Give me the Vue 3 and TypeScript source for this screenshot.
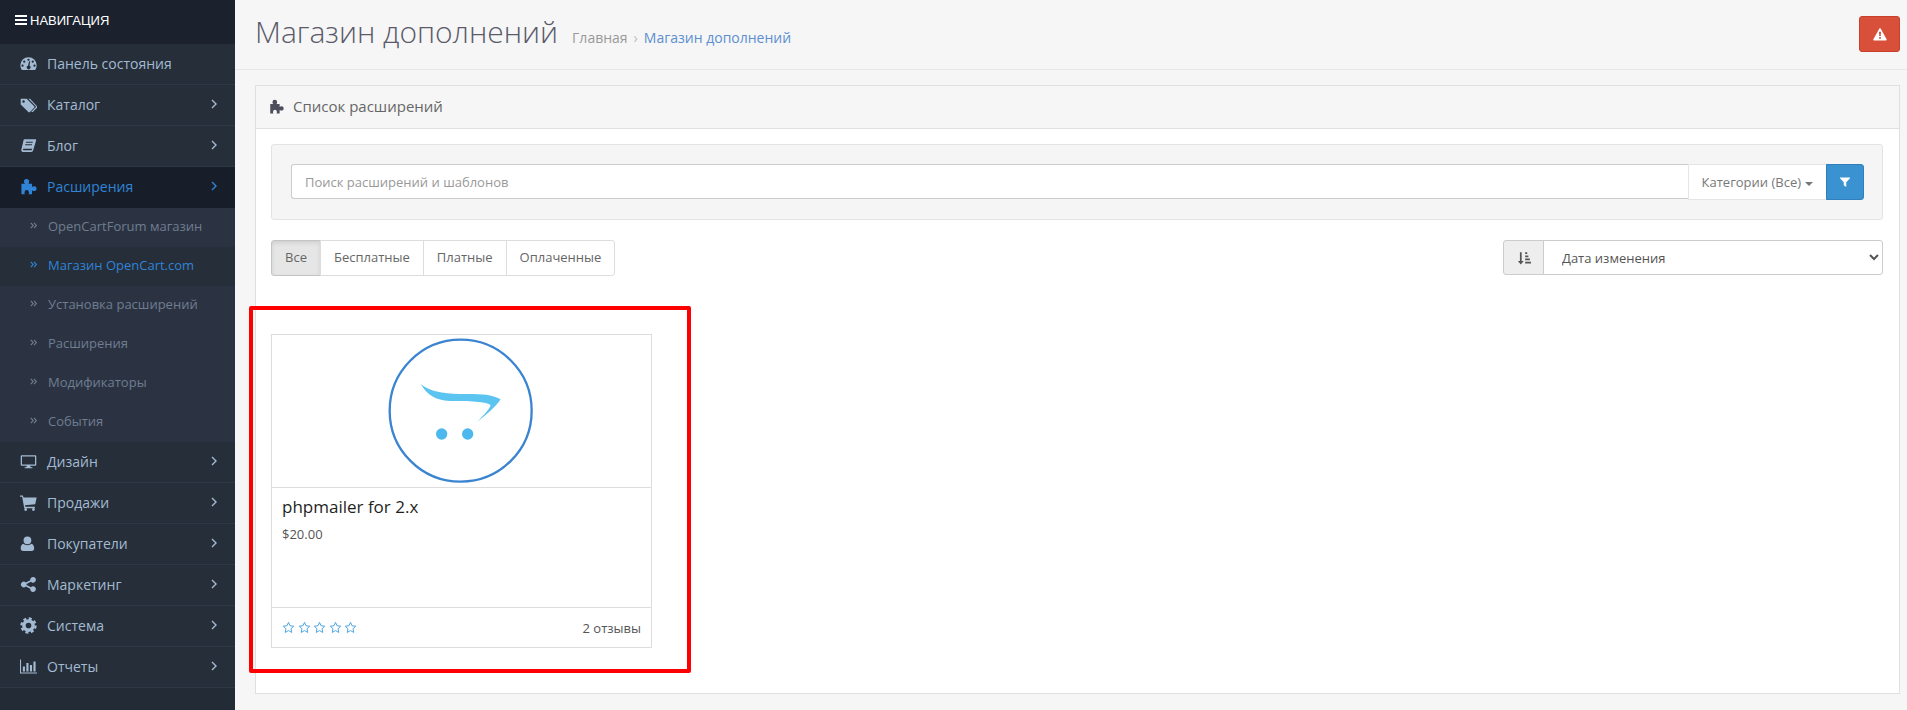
<script setup lang="ts">
interface MenuItem {
  label: string
  icon: string
  arrow: boolean
  active?: boolean
}

const topMenu: MenuItem[] = [
  { label: 'Панель состояния', icon: 'dashboard', arrow: false },
  { label: 'Каталог', icon: 'tags', arrow: true },
  { label: 'Блог', icon: 'book', arrow: true },
  { label: 'Расширения', icon: 'puzzle', arrow: true, active: true }
]

const subMenu = [
  { label: 'OpenCartForum магазин', active: false },
  { label: 'Магазин OpenCart.com', active: true },
  { label: 'Установка расширений', active: false },
  { label: 'Расширения', active: false },
  { label: 'Модификаторы', active: false },
  { label: 'События', active: false }
]

const bottomMenu: MenuItem[] = [
  { label: 'Дизайн', icon: 'desktop', arrow: true },
  { label: 'Продажи', icon: 'cart', arrow: true },
  { label: 'Покупатели', icon: 'user', arrow: true },
  { label: 'Маркетинг', icon: 'share', arrow: true },
  { label: 'Система', icon: 'cog', arrow: true },
  { label: 'Отчеты', icon: 'chart', arrow: true }
]

const tabs = ['Все', 'Бесплатные', 'Платные', 'Оплаченные']
const stars = [1, 2, 3, 4, 5]

const icons: Record<string, string> = {
  dashboard:
    'M12 3A11.5 11.5 0 0 0 .5 14.5c0 2.6.8 4.8 2.2 6.5h18.6c1.4-1.7 2.2-3.9 2.2-6.5A11.5 11.5 0 0 0 12 3zM12 5.2a1.6 1.6 0 1 1 0 3.2 1.6 1.6 0 0 1 0-3.2zM6 7.8a1.6 1.6 0 1 1 0 3.2 1.6 1.6 0 0 1 0-3.2zM18 7.8a1.6 1.6 0 1 1 0 3.2 1.6 1.6 0 0 1 0-3.2zM3.6 13.4a1.6 1.6 0 1 1 0 3.2 1.6 1.6 0 0 1 0-3.2zM20.4 13.4a1.6 1.6 0 1 1 0 3.2 1.6 1.6 0 0 1 0-3.2zM14.4 9l-1 6.2a2.6 2.6 0 1 1-2.1-.1l1.6-6.4z',
  tags:
    'M1 4h8.5L20 14.5a1.6 1.6 0 0 1 0 2.2l-6 6a1.6 1.6 0 0 1-2.2 0L1 12zM5 6a1.8 1.8 0 1 0 0 3.6A1.8 1.8 0 0 0 5 6zM12 4h2.2L24 14.5a1.6 1.6 0 0 1 0 2.2l-6 6h-2.4l6.6-6.8a1.4 1.4 0 0 0 0-1.6z',
  book:
    'M6 3h15.5c1 0 1.5.8 1.2 1.8L18.5 19c-.4 1.3-1.2 2-2.6 2H4.2C2.6 21 1.5 19.5 1.8 18L5 4.5C5.2 3.6 5.5 3 6 3zM8.6 6.8l-.4 1.4h9.6l.4-1.4zM7.5 10.4l-.4 1.4h9.6l.4-1.4zM5.3 16.5c-.8 0-1.3.5-1.3 1.2s.5 1.1 1.3 1.1h11.2l.7-2.3z',
  puzzle:
    'M7 8C6 7 5.5 6 5.5 5A3.7 3.7 0 0 1 13 5C13 6 12.5 7 12 8H17V12.5C18 12 19 11.5 20 11.5A3.5 3.5 0 0 1 20 18.5C19 18.5 18 18 17 17.5V23H12C12.5 22 13 21 12.5 20A3 3 0 0 0 6.5 20C6 21 6.500 22 7 23H2V8Z',
  desktop:
    'M2.5 3h19A1.5 1.5 0 0 1 23 4.5v12a1.5 1.5 0 0 1-1.5 1.5H14.5l.5 2h2.5v1.5h-11V20H9l.5-2H2.5A1.5 1.5 0 0 1 1 16.5v-12A1.5 1.5 0 0 1 2.5 3zM2.8 4.8v11.400h18.400V4.800z',
  cart:
    'M0 2h4l1 3h18.5l-2 9.5-14.5 1.5.5 2H21v2H6L3 3.900H0zM8 20a2 2 0 1 1 0 4 2 2 0 0 1 0-4zM19 20a2 2 0 1 1 0 4 2 2 0 0 1 0-4z',
  user:
    'M10.5 2a5.5 5.5 0 1 1 0 11 5.5 5.5 0 0 1 0-11zM5 12.5c1.4 1.4 3.4 2 5.5 2s4.100-.6 5.500-2c2.500.3 4 2.800 4 6.500 0 2.200-1.300 3.500-3.400 3.500H4.400C2.300 22.500 1 21.200 1 19c0-3.700 1.500-6.200 4-6.500z',
  share:
    'M18.5 1.500a4 4 0 1 1-3 6.700l-6.300 3.100a4 4 0 0 1 0 1.400l6.300 3.100a4 4 0 1 1-1 2.100l-6.300-3.100a4 4 0 1 1 0-5.600l6.300-3.100a4 4 0 0 1 4-4.600z',
  chart:
    'M0 2h1.500v18.500H24V22H0zM4 12h3v7H4zM9 7h3v12H9zM14 10h3v9h-3zM19 5h3v14h-3z',
  filter: 'M2 3h20v1.500l-7.500 8V22l-5-3.500v-6L2 4.500z',
  warning:
    'M12 2c.6 0 1 .3 1.300.8l10 18c.5 1-.1 2.200-1.300 2.200H2c-1.200 0-1.800-1.200-1.300-2.200l10-18C11 2.300 11.400 2 12 2zM10.300 8l.4 7.500h2.600l.4-7.500zM10.500 17v3h3v-3z',
  sort:
    'M5 2h3v15h3.500l-5 6-5-6H5zM14 2h3.500v3H14zM14 7.500h5.500v3H14zM14 13h8v3h-8zM14 18.500h10v3H14z'
}
</script>

<template>
  <div class="page">
    <aside class="sidebar">
      <div class="nav-title">
        <svg class="bars" viewBox="0 0 12 10"><path d="M0 0h12v2H0zM0 4h12v2H0zM0 8h12v2H0z" /></svg>
        НАВИГАЦИЯ
      </div>
      <ul class="menu">
        <li v-for="item in topMenu" :key="item.label" class="menu-row" :class="{ active: item.active }">
          <svg class="menu-icon" viewBox="0 0 24 24"><path fill-rule="evenodd" :d="icons[item.icon]" /></svg>
          <span class="menu-label">{{ item.label }}</span>
          <svg v-if="item.arrow" class="arrow" viewBox="0 0 6 10"><path d="M1 1l4 4-4 4" /></svg>
        </li>
        <li class="sub-wrap">
          <ul class="submenu">
            <li v-for="sub in subMenu" :key="sub.label" class="sub-row" :class="{ active: sub.active }">
              <svg class="sub-arrow" viewBox="0 0 10 8"><path d="M1 .8l3 3.200-3 3.200M5 .8l3 3.200-3 3.200" /></svg>
              {{ sub.label }}
            </li>
          </ul>
        </li>
        <li v-for="item in bottomMenu" :key="item.label" class="menu-row">
          <svg v-if="item.icon === 'cog'" class="menu-icon" viewBox="0 0 24 24">
            <circle class="cog-ring" cx="12" cy="12" r="6.500" />
            <circle class="cog-teeth" cx="12" cy="12" r="9.800" />
          </svg>
          <svg v-else class="menu-icon" viewBox="0 0 24 24"><path fill-rule="evenodd" :d="icons[item.icon]" /></svg>
          <span class="menu-label">{{ item.label }}</span>
          <svg v-if="item.arrow" class="arrow" viewBox="0 0 6 10"><path d="M1 1l4 4-4 4" /></svg>
        </li>
      </ul>
    </aside>

    <main class="content">
      <header class="page-header">
        <h1>Магазин дополнений</h1>
        <div class="crumbs">
          <span class="crumb-home">Главная</span>
          <span class="crumb-sep">›</span>
          <span class="crumb-link">Магазин дополнений</span>
        </div>
        <button class="btn-alert" type="button">
          <svg viewBox="0 0 24 24"><path fill-rule="evenodd" :d="icons.warning" /></svg>
        </button>
      </header>

      <section class="panel">
        <div class="panel-heading">
          <svg class="panel-icon" viewBox="0 0 24 24"><path fill-rule="evenodd" :d="icons.puzzle" /></svg>
          Список расширений
        </div>
        <div class="panel-body">
          <div class="well">
            <input class="search" type="text" placeholder="Поиск расширений и шаблонов" />
            <button class="btn-category" type="button">Категории (Все) <i class="caret"></i></button>
            <button class="btn-filter" type="button">
              <svg viewBox="0 0 24 24"><path :d="icons.filter" /></svg>
            </button>
          </div>

          <div class="toolbar">
            <div class="tabs">
              <button v-for="(tab, i) in tabs" :key="tab" class="tab" :class="{ on: i === 0 }" type="button">{{ tab }}</button>
            </div>
            <div class="sort">
              <span class="sort-addon">
                <svg viewBox="0 0 24 24"><path :d="icons.sort" /></svg>
              </span>
              <select class="sort-select">
                <option>Дата изменения</option>
              </select>
            </div>
          </div>

          <article class="card">
            <div class="card-image">
              <svg class="logo" viewBox="45 15 450 453">
                <circle cx="272" cy="242" r="213" fill="none" stroke="#3a84d0" stroke-width="7" />
                <path fill="#5cc4f0" d="M152 162C178 184 215 191 270 192C320 192 360 190 392 208C375 235 345 255 320 278C340 255 358 240 362 225C340 212 280 214 240 213C195 211 172 195 152 162Z" />
                <circle cx="215" cy="312" r="17" fill="#4cb8ee" />
                <circle cx="293" cy="312" r="17" fill="#4cb8ee" />
              </svg>
            </div>
            <div class="card-caption">
              <h4>phpmailer for 2.x</h4>
              <p>$20.00</p>
            </div>
            <div class="card-footer">
              <div class="stars">
                <svg v-for="s in stars" :key="s" class="star" viewBox="0 0 24 24">
                  <path d="M12 2.500l2.900 6.300 6.800.8-5 4.700 1.300 6.800-6-3.400-6 3.400 1.300-6.800-5-4.700 6.800-.8z" />
                </svg>
              </div>
              <span class="reviews">2 отзывы</span>
            </div>
          </article>
        </div>
      </section>

      <div class="red-frame"></div>
    </main>
  </div>
</template>

<style>
html,
body {
  margin: 0;
  background: #f6f6f6;
}
</style>

<style scoped>
* {
  box-sizing: border-box;
}

.page {
  display: flex;
  height: 710px;
  overflow: hidden;
  font-family: "Open Sans", sans-serif;
  font-size: 13px;
  color: #666;
}

/* sidebar */
.sidebar {
  width: 235px;
  flex-shrink: 0;
  background: #232b36;
}

.nav-title {
  height: 44px;
  padding: 0 0 4px 15px;
  display: flex;
  align-items: center;
  gap: 3px;
  background: #1b222e;
  color: #fff;
  font-family: "Liberation Sans", sans-serif;
  font-size: 13px;
}

.bars {
  width: 12px;
  height: 10px;
  fill: #fff;
}

.menu,
.submenu {
  list-style: none;
  margin: 0;
  padding: 0;
}

.menu-row {
  height: 41px;
  display: flex;
  align-items: center;
  padding: 0 18px 2px 20px;
  background: #262e39;
  border-bottom: 1px solid #2e3845;
  color: #a3bbd2;
  font-size: 14px;
}

.menu-row.active {
  background: #181e29;
  border-bottom-color: #181e29;
  color: #2f84d6;
}

.menu-icon {
  width: 17px;
  height: 17px;
  fill: currentColor;
  flex-shrink: 0;
  margin-right: 10px;
}

.cog-ring {
  fill: none;
  stroke: currentColor;
  stroke-width: 5;
}

.cog-teeth {
  fill: none;
  stroke: currentColor;
  stroke-width: 3.500;
  stroke-dasharray: 4.200 3.500;
}

.menu-label {
  flex: 1;
}

.arrow {
  width: 6px;
  height: 10px;
  fill: none;
  stroke: currentColor;
  stroke-width: 1.400;
}

.submenu {
  background: #2b3342;
}

.sub-row {
  height: 39px;
  display: flex;
  align-items: center;
  padding: 0 0 4px 30px;
  color: #6f7d90;
  font-size: 13px;
}

.sub-row.active {
  background: #262e39;
  color: #2f84d6;
}

.sub-arrow {
  width: 8px;
  height: 7px;
  margin-right: 10px;
  fill: none;
  stroke: currentColor;
  stroke-width: 1.400;
}

/* content */
.content {
  flex: 1;
  position: relative;
  min-width: 0;
}

.page-header {
  height: 70px;
  display: flex;
  align-items: center;
  padding: 0 7px 0 20px;
  border-bottom: 1px solid #e7e7e7;
}

h1 {
  margin: 0;
  font-size: 30px;
  font-weight: 300;
  color: #5a5a6a;
  line-height: 1;
  padding-bottom: 6px;
}

.crumbs {
  margin-left: 14px;
  font-size: 14px;
  padding-top: 6px;
  flex: 1;
}

.crumb-home {
  color: #999;
}

.crumb-sep {
  margin: 0 6px;
  color: #bbb;
}

.crumb-link {
  color: #5c8fd0;
}

.btn-alert {
  width: 41px;
  height: 36px;
  margin-top: -1px;
  padding: 0;
  border: 1px solid #c9402c;
  border-radius: 3px;
  background: #d9503a;
  display: flex;
  align-items: center;
  justify-content: center;
}

.btn-alert svg {
  width: 14px;
  height: 14px;
  fill: #fff;
}

.panel {
  margin: 15px 7px 0 20px;
  height: 609px;
  border: 1px solid #e0e0e0;
  background: #fff;
}

.panel-heading {
  height: 43px;
  display: flex;
  align-items: center;
  padding: 0 0 2px 13px;
  background: #f6f6f6;
  border-bottom: 1px solid #e0e0e0;
  font-size: 15px;
  color: #666;
}

.panel-icon {
  width: 15px;
  height: 15px;
  margin-right: 9px;
  fill: #4d4d5c;
}

.panel-body {
  padding: 15px 16px 0 15px;
}

.well {
  height: 76px;
  display: flex;
  align-items: flex-start;
  padding: 19px 18px 0 19px;
  border: 1px solid #e3e3e3;
  border-radius: 3px;
  background: #f5f5f5;
  margin-bottom: 20px;
}

.search {
  flex: 1;
  min-width: 0;
  height: 35px;
  padding: 0 13px;
  border: 1px solid #ccc;
  border-right: 0;
  border-radius: 3px 0 0 3px;
  background: #fff;
  font: 13px "Open Sans", sans-serif;
  color: #555;
}

.search::placeholder {
  color: #999;
  opacity: 1;
}

.btn-category {
  width: 138px;
  height: 36px;
  padding: 0;
  border: 1px solid #e5e5e5;
  border-right: 0;
  background: #fff;
  font: 13px "Open Sans", sans-serif;
  color: #777;
}

.caret {
  display: inline-block;
  vertical-align: middle;
  width: 0;
  height: 0;
  border-top: 4px solid #777;
  border-left: 4px solid transparent;
  border-right: 4px solid transparent;
  margin-left: 1px;
}

.btn-filter {
  width: 38px;
  height: 36px;
  padding: 0;
  border: 1px solid #2f7fbd;
  border-radius: 0 3px 3px 0;
  background: #3b92d1;
  display: flex;
  align-items: center;
  justify-content: center;
}

.btn-filter svg {
  width: 12px;
  height: 12px;
  fill: #fff;
}

.toolbar {
  display: flex;
  justify-content: space-between;
  align-items: flex-start;
  margin-bottom: 58px;
}

.tabs {
  display: flex;
}

.tab {
  height: 36px;
  padding: 0 13px 2px;
  margin-left: -1px;
  border: 1px solid #ddd;
  background: #fff;
  font: 13px "Open Sans", sans-serif;
  color: #666;
}

.tab:first-child {
  margin-left: 0;
  border-radius: 3px 0 0 3px;
}

.tab:last-child {
  border-radius: 0 3px 3px 0;
}

.tab.on {
  background: #e6e6e6;
  border-color: #c4c4c4;
  box-shadow: inset 0 2px 4px rgba(0, 0, 0, 0.1);
}

.sort {
  display: flex;
  width: 380px;
  height: 35px;
}

.sort-addon {
  width: 41px;
  display: flex;
  align-items: center;
  justify-content: center;
  background: #eee;
  border: 1px solid #ccc;
  border-radius: 3px 0 0 3px;
}

.sort-addon svg {
  width: 14px;
  height: 14px;
  fill: #555;
}

.sort-select {
  flex: 1;
  min-width: 0;
  margin-left: -1px;
  padding: 0 14px;
  border: 1px solid #ccc;
  border-radius: 0 3px 3px 0;
  background: #fff;
  font: 13px "Open Sans", sans-serif;
  color: #555;
}

.card {
  width: 381px;
  height: 314px;
  display: flex;
  flex-direction: column;
  border: 1px solid #ddd;
}

.card-image {
  height: 153px;
  display: flex;
  align-items: flex-start;
  justify-content: center;
  padding-right: 4px;
  border-bottom: 1px solid #ddd;
}

.logo {
  width: 150px;
  height: 151px;
}

.card-caption {
  flex: 1;
  padding: 8px 10px;
  border-bottom: 1px solid #ddd;
}

h4 {
  margin: 0 0 7px;
  font-size: 17px;
  font-weight: 400;
  line-height: 22px;
  color: #1f1f1f;
}

.card-caption p {
  margin: 0;
  font-size: 13px;
  color: #555;
}

.card-footer {
  height: 39px;
  display: flex;
  align-items: center;
  justify-content: space-between;
  padding: 0 10px;
}

.stars {
  display: flex;
  gap: 2.500px;
}

.star {
  width: 13px;
  height: 13px;
  fill: none;
  stroke: #4aa3e0;
  stroke-width: 1.800;
}

.reviews {
  font-size: 13px;
  color: #555;
}

/* annotation drawn over the screenshot */
.red-frame {
  position: absolute;
  left: 14px;
  top: 306px;
  width: 442px;
  height: 367px;
  border: 4px solid #f00;
  border-radius: 2px;
  pointer-events: none;
}
</style>
